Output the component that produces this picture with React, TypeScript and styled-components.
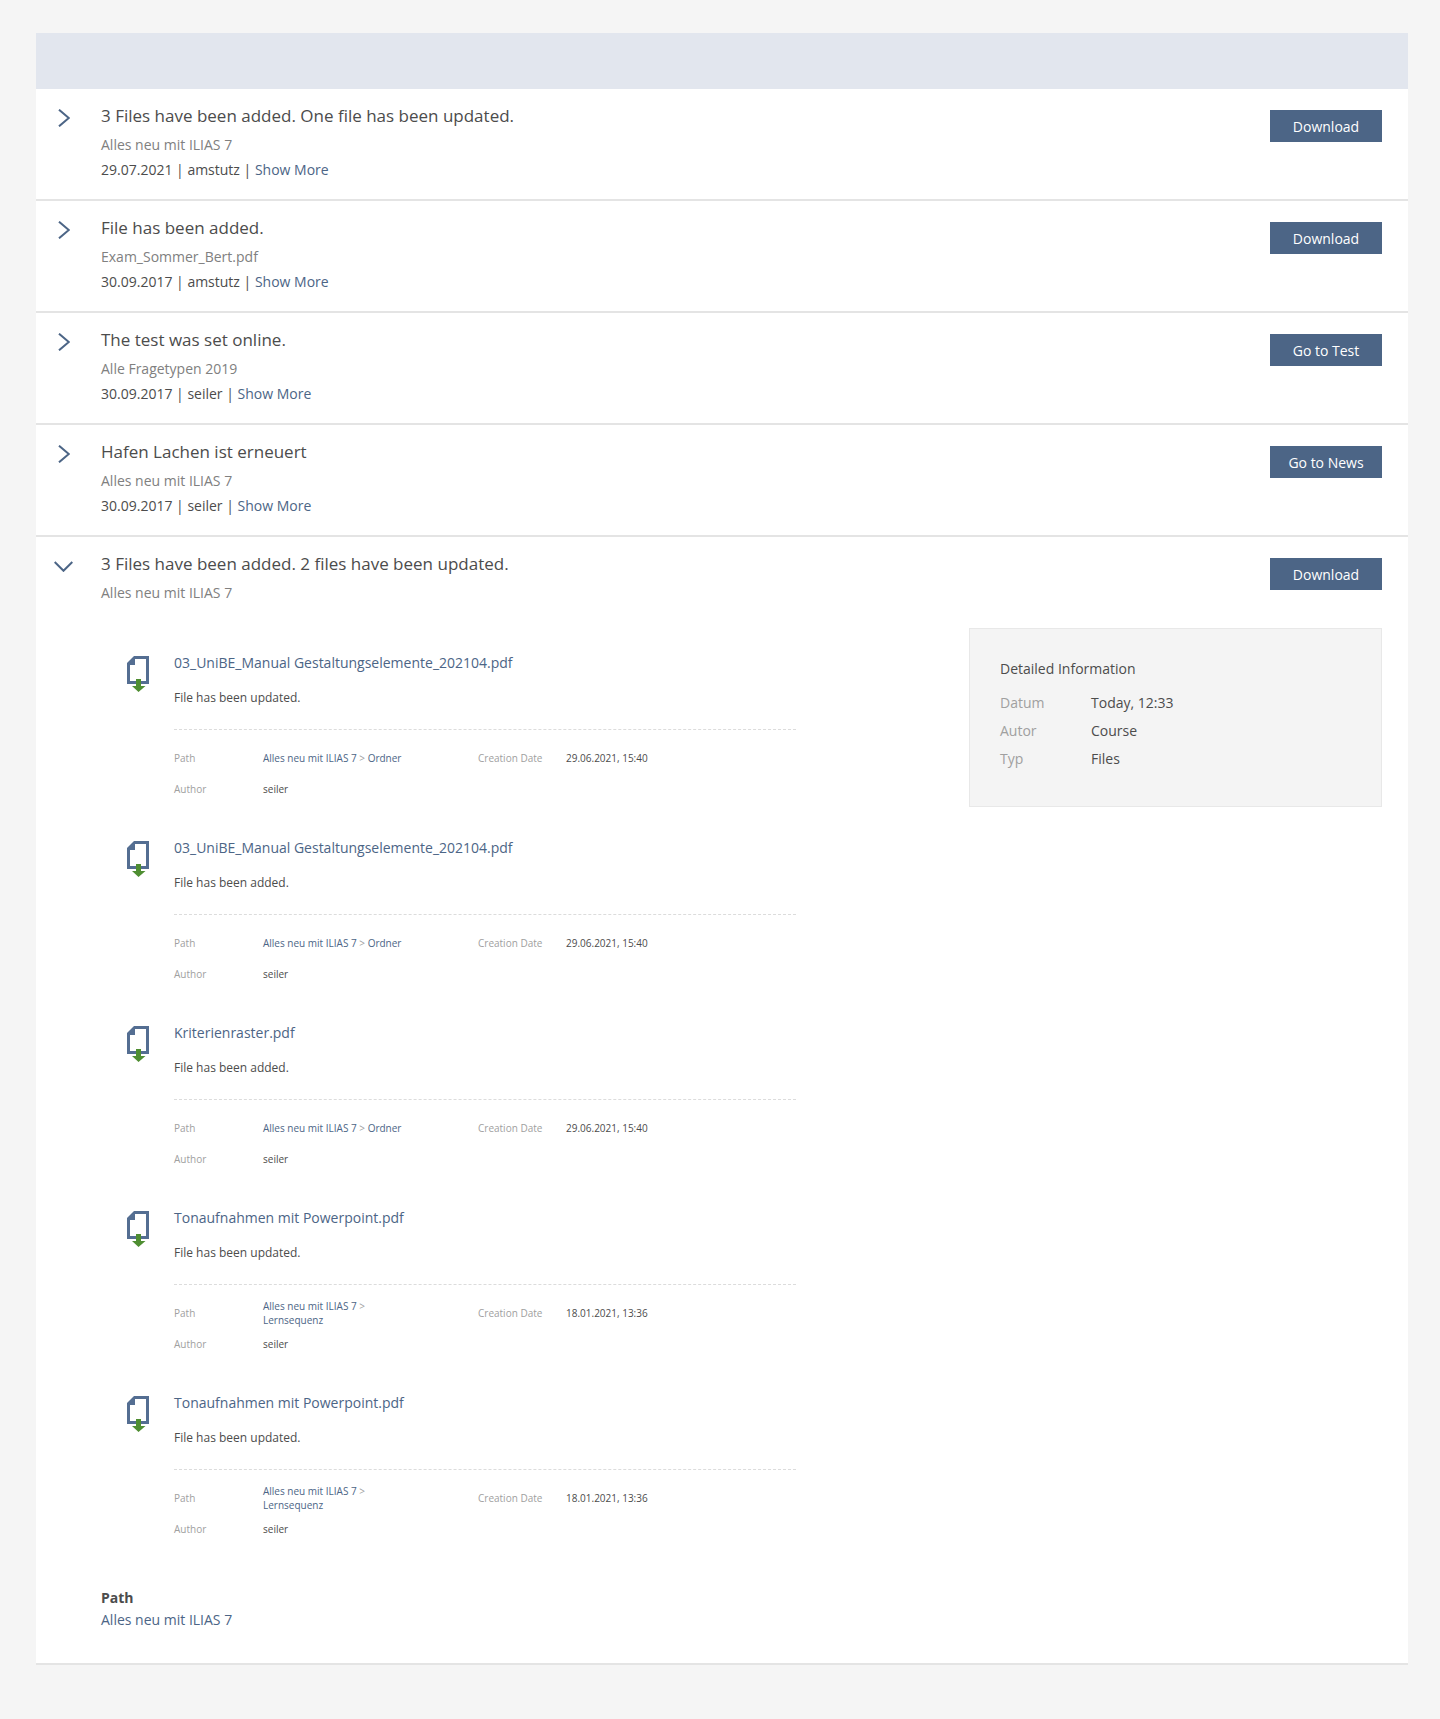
import React from 'react';
import styled, { createGlobalStyle } from 'styled-components';

const GlobalStyle = createGlobalStyle`
  html, body {
    margin: 0;
    background: #f5f5f5;
    font-family: 'Open Sans', 'Liberation Sans', sans-serif;
    color: #4c4c4c;
  }
  * { box-sizing: border-box; }
`;

const Page = styled.div`
  padding: 33px 32px 53px 36px;
  min-height: 1719px;
`;

const Panel = styled.div`
  background: #fff;
`;

const PanelHeader = styled.div`
  height: 56px;
  background: #e2e6ee;
`;

const Row = styled.div`
  display: grid;
  grid-template-columns: 65px 1fr 112px;
  padding: 0 26px 0 0;
  border-bottom: 2px solid #e4e4e4;
  min-height: 112px;
`;

const Toggle = styled.div<{ $open?: boolean }>`
  display: flex;
  justify-content: center;
  align-items: flex-start;
  padding: ${(p) => (p.$open ? '24px 10px 0 0' : '20px 10px 0 0')};
`;

const RowBody = styled.div`
  padding: 14px 0 0;
  min-width: 0;
`;

const Title = styled.div`
  font-size: 17px;
  line-height: 25px;
  color: #4c4c4c;
`;

const Sub = styled.div`
  margin-top: 7px;
  font-size: 14px;
  line-height: 19px;
  color: #808080;
`;

const Meta = styled.div`
  margin-top: 6px;
  font-size: 14px;
  line-height: 19px;
  color: #4c4c4c;
`;

const LinkText = styled.a`
  color: #4c6586;
  text-decoration: none;
`;

const Action = styled.button`
  margin-top: 21px;
  width: 112px;
  height: 32px;
  border: 0;
  background: #4c6586;
  color: #fff;
  font-family: inherit;
  font-size: 14px;
  padding: 0;
`;

const Detail = styled.div`
  grid-column: 2 / 4;
  display: grid;
  grid-template-columns: 1fr 413px;
  margin-top: 26px;
`;

const Items = styled.div`
  display: flex;
  flex-direction: column;
`;

const Item = styled.div`
  display: grid;
  grid-template-columns: 73px 622px;
  height: 185px;
`;

const IconCell = styled.div`
  padding: 28px 0 0 26px;
`;

const ItemMain = styled.div`
  padding-top: 25px;
`;

const ItemTitle = styled(LinkText)`
  display: block;
  font-size: 14px;
  line-height: 19px;
`;

const ItemText = styled.div`
  margin-top: 17px;
  font-size: 12px;
  line-height: 17px;
  color: #4c4c4c;
`;

const Rule = styled.div`
  margin-top: 23px;
  border-top: 1px dashed #dcdcdc;
`;

const Props = styled.div`
  display: grid;
  grid-template-columns: 89px 215px 88px 1fr;
  grid-template-rows: 28px 28px;
  row-gap: 3px;
  align-items: center;
  margin-top: 14px;
  font-size: 10px;
  line-height: 14px;
`;

const PropLabel = styled.div`
  color: #a0a0a0;
`;

const PropValue = styled.div`
  color: #4c4c4c;
`;

const PathValue = styled.div`
  color: #a0a0a0;
  max-width: 150px;
`;

const InfoCard = styled.div`
  height: 179px;
  padding: 30px 30px;
  background: #f4f4f4;
  border: 1px solid #e8e8e8;
`;

const InfoTitle = styled.div`
  font-size: 14px;
  line-height: 19px;
  color: #4c4c4c;
  margin-bottom: 11px;
`;

const InfoRow = styled.div`
  display: grid;
  grid-template-columns: 91px 1fr;
  font-size: 14px;
  line-height: 28px;
`;

const InfoLabel = styled.div`
  color: #a0a0a0;
`;

const InfoValue = styled.div`
  color: #4c4c4c;
`;

const PathBlock = styled.div`
  grid-column: 2 / 4;
  padding: 34px 0 32px;
  font-size: 14px;
  line-height: 22px;
`;

const PathTitle = styled.div`
  font-weight: 700;
  color: #4c4c4c;
`;

const ChevronRight = () => (
  <svg width='12' height='18' viewBox='0 0 12 18' aria-hidden={true}>
    <path d='M1 .7L10.8 9 1 17.3' fill='none' stroke='#4c6586' strokeWidth='2' />
  </svg>
);

const ChevronDown = () => (
  <svg width='19' height='11' viewBox='0 0 19 11' aria-hidden={true}>
    <path d='M.7 1L9.5 9.8 18.3 1' fill='none' stroke='#4c6586' strokeWidth='2' />
  </svg>
);

const FileIcon = () => (
  <svg width='22' height='36' viewBox='0 0 22 36' aria-hidden={true}>
    <path d='M7 0h15v28H0V7z' fill='#546e92' />
    <path d='M8 3h11v22H3V9h5z' fill='#fff' />
    <path d='M9 23h5v7h4.5L11.5 36 5 30h4z' fill='#4f8e32' />
  </svg>
);

const news = [
  { title: '3 Files have been added. One file has been updated.', sub: 'Alles neu mit ILIAS 7', date: '29.07.2021', author: 'amstutz', action: 'Download' },
  { title: 'File has been added.', sub: 'Exam_Sommer_Bert.pdf', date: '30.09.2017', author: 'amstutz', action: 'Download' },
  { title: 'The test was set online.', sub: 'Alle Fragetypen 2019', date: '30.09.2017', author: 'seiler', action: 'Go to Test' },
  { title: 'Hafen Lachen ist erneuert', sub: 'Alles neu mit ILIAS 7', date: '30.09.2017', author: 'seiler', action: 'Go to News' },
];

const files = [
  { name: '03_UniBE_Manual Gestaltungselemente_202104.pdf', text: 'File has been updated.', folder: 'Ordner', date: '29.06.2021, 15:40' },
  { name: '03_UniBE_Manual Gestaltungselemente_202104.pdf', text: 'File has been added.', folder: 'Ordner', date: '29.06.2021, 15:40' },
  { name: 'Kriterienraster.pdf', text: 'File has been added.', folder: 'Ordner', date: '29.06.2021, 15:40' },
  { name: 'Tonaufnahmen mit Powerpoint.pdf', text: 'File has been updated.', folder: 'Lernsequenz', date: '18.01.2021, 13:36' },
  { name: 'Tonaufnahmen mit Powerpoint.pdf', text: 'File has been updated.', folder: 'Lernsequenz', date: '18.01.2021, 13:36' },
];

const info = [
  ['Datum', 'Today, 12:33'],
  ['Autor', 'Course'],
  ['Typ', 'Files'],
];

const App = () => (
  <Page>
    <GlobalStyle />
    <Panel>
      <PanelHeader />
      {news.map((entry) => (
        <Row key={entry.title}>
          <Toggle>
            <ChevronRight />
          </Toggle>
          <RowBody>
            <Title>{entry.title}</Title>
            <Sub>{entry.sub}</Sub>
            <Meta>
              {entry.date} | {entry.author} | <LinkText>Show More</LinkText>
            </Meta>
          </RowBody>
          <Action>{entry.action}</Action>
        </Row>
      ))}
      <Row>
        <Toggle $open>
          <ChevronDown />
        </Toggle>
        <RowBody>
          <Title>3 Files have been added. 2 files have been updated.</Title>
          <Sub>Alles neu mit ILIAS 7</Sub>
        </RowBody>
        <Action>Download</Action>
        <Detail>
          <Items>
            {files.map((file, index) => (
              <Item key={index}>
                <IconCell>
                  <FileIcon />
                </IconCell>
                <ItemMain>
                  <ItemTitle>{file.name}</ItemTitle>
                  <ItemText>{file.text}</ItemText>
                  <Rule />
                  <Props>
                    <PropLabel>Path</PropLabel>
                    <PathValue>
                      <LinkText>Alles neu mit ILIAS 7</LinkText> &gt; <LinkText>{file.folder}</LinkText>
                    </PathValue>
                    <PropLabel>Creation Date</PropLabel>
                    <PropValue>{file.date}</PropValue>
                    <PropLabel>Author</PropLabel>
                    <PropValue>seiler</PropValue>
                  </Props>
                </ItemMain>
              </Item>
            ))}
          </Items>
          <InfoCard>
            <InfoTitle>Detailed Information</InfoTitle>
            {info.map(([label, value]) => (
              <InfoRow key={label}>
                <InfoLabel>{label}</InfoLabel>
                <InfoValue>{value}</InfoValue>
              </InfoRow>
            ))}
          </InfoCard>
        </Detail>
        <PathBlock>
          <PathTitle>Path</PathTitle>
          <LinkText>Alles neu mit ILIAS 7</LinkText>
        </PathBlock>
      </Row>
    </Panel>
  </Page>
);

export default App;
